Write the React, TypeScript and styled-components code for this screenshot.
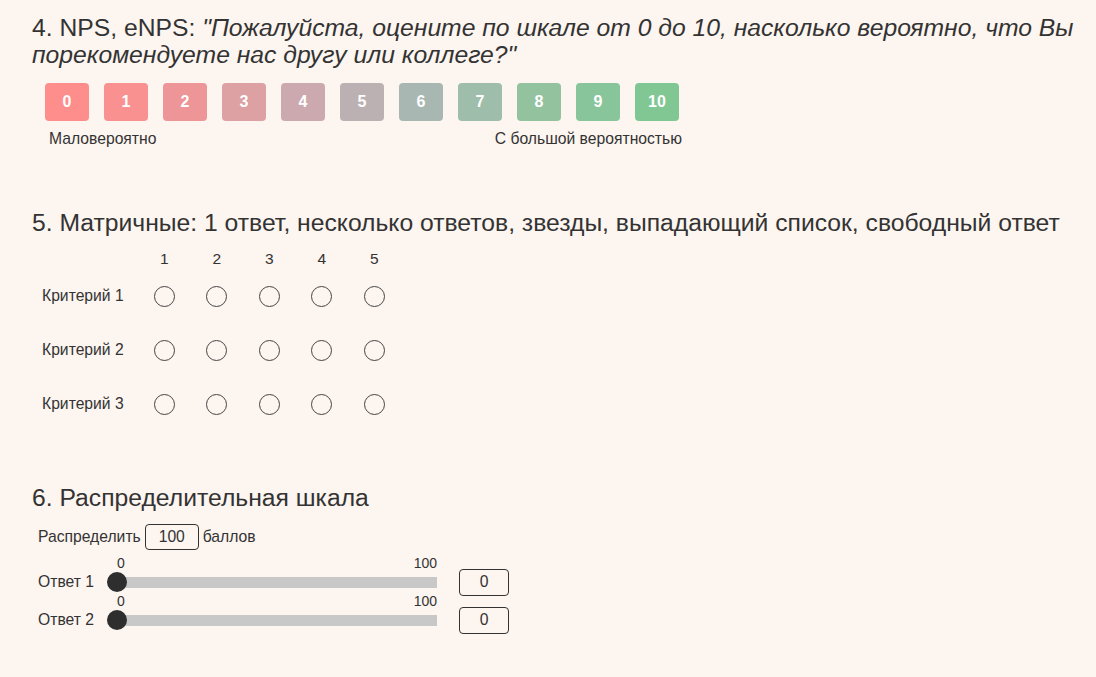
import * as React from "react";
import styled, { createGlobalStyle } from "styled-components";

const npsColors = [
  "#fe8e8c", "#f99191", "#ee9597", "#dda0a3", "#cca9ae", "#bbb1b3",
  "#a9b7b2", "#9ebdab", "#93c29f", "#89c59a", "#80c793",
];

const criteria = ["Критерий 1", "Критерий 2", "Критерий 3"];
const answers = ["Ответ 1", "Ответ 2"];

const GlobalStyle = createGlobalStyle`
  html, body {
    margin: 0;
    padding: 0;
    background: #fdf5f0;
  }
  body {
    font-family: "Liberation Sans", Arial, sans-serif;
    color: #333;
  }
  * {
    box-sizing: border-box;
  }
`;

export default function App() {
  return (
    <>
      <GlobalStyle />
      <Page>
        <Title>
          4. NPS, eNPS: <Quote>"Пожалуйста, оцените по шкале от 0 до 10, насколько вероятно, что Вы порекомендуете нас другу или коллеге?"</Quote>
        </Title>
        <Nps>
          <NpsRow>
            {npsColors.map((c, i) => (
              <NpsButton key={i} $color={c}>{i}</NpsButton>
            ))}
          </NpsRow>
          <NpsLabels>
            <span>Маловероятно</span>
            <span>С большой вероятностью</span>
          </NpsLabels>
        </Nps>

        <Title $top={61}>
          5. Матричные: 1 ответ, несколько ответов, звезды, выпадающий список, свободный ответ
        </Title>
        <Matrix>
          <span />
          {[1, 2, 3, 4, 5].map((n) => (
            <ColHead key={n}>{n}</ColHead>
          ))}
          {criteria.map((c) => (
            <React.Fragment key={c}>
              <RowLabel>{c}</RowLabel>
              {[1, 2, 3, 4, 5].map((n) => (
                <Cell key={n}>
                  <Radio />
                </Cell>
              ))}
            </React.Fragment>
          ))}
        </Matrix>

        <Title $top={53}>6. Распределительная шкала</Title>
        <Distribute>
          Распределить <TotalBox>100</TotalBox> баллов
        </Distribute>
        <Answers>
          {answers.map((a) => (
            <Answer key={a}>
              <span />
              <ScaleLabels>
                <span>0</span>
                <span>100</span>
              </ScaleLabels>
              <span />
              <AnswerLabel>{a}</AnswerLabel>
              <Track>
                <Thumb />
              </Track>
              <ValueBox>0</ValueBox>
            </Answer>
          ))}
        </Answers>
      </Page>
    </>
  );
}

const Page = styled.div`
  padding: 14px 0 40px 32px;
`;

const Title = styled.h2<{ $top?: number }>`
  margin: ${(p) => p.$top || 0}px 0 0;
  font-size: 24.7px;
  line-height: 27px;
  font-weight: normal;
  color: #333;
  width: 1062px;
`;

const Quote = styled.i`
  font-style: italic;
`;

const Nps = styled.div`
  margin: 15px 0 0 13px;
  width: 637px;
`;

const NpsRow = styled.div`
  display: flex;
  gap: 15px;
`;

const NpsButton = styled.div<{ $color: string }>`
  width: 44px;
  height: 38px;
  border-radius: 4px;
  background: ${(p) => p.$color};
  color: #fff;
  font-weight: bold;
  font-size: 16px;
  display: flex;
  align-items: center;
  justify-content: center;
`;

const NpsLabels = styled.div`
  display: flex;
  justify-content: space-between;
  margin-top: 9px;
  padding: 0 0 0 4px;
  font-size: 15.7px;
  line-height: 18px;
`;

const Matrix = styled.div`
  display: grid;
  grid-template-columns: 96px repeat(5, 52.5px);
  grid-template-rows: 20px repeat(3, 54px);
  margin: 13px 0 0 10px;
  font-size: 15.7px;
`;

const ColHead = styled.div`
  display: flex;
  align-items: center;
  justify-content: center;
  font-size: 15.5px;
`;

const RowLabel = styled.div`
  display: flex;
  align-items: center;
`;

const Cell = styled.div`
  display: flex;
  align-items: center;
  justify-content: center;
`;

const Radio = styled.div`
  width: 21px;
  height: 21px;
  border: 1.5px solid #444;
  border-radius: 50%;
`;

const Distribute = styled.div`
  display: flex;
  align-items: center;
  gap: 4px;
  margin: 13px 0 0 6px;
  font-size: 15.7px;
`;

const TotalBox = styled.div`
  width: 54px;
  height: 26px;
  border: 1px solid #333;
  border-radius: 4px;
  display: flex;
  align-items: center;
  justify-content: center;
`;

const Answers = styled.div`
  margin: 6px 0 0 6px;
`;

const Answer = styled.div`
  display: grid;
  grid-template-columns: 79px 320px 72px;
  grid-template-rows: 14px 24px;
  align-items: center;
  font-size: 15.7px;
`;

const ScaleLabels = styled.div`
  display: flex;
  justify-content: space-between;
  font-size: 14px;
  line-height: 14px;
`;

const AnswerLabel = styled.div``;

const Track = styled.div`
  position: relative;
  height: 11px;
  background: #c8c8c8;
`;

const Thumb = styled.div`
  position: absolute;
  left: -10px;
  top: -4.5px;
  width: 20px;
  height: 20px;
  border-radius: 50%;
  background: #2e2e2e;
`;

const ValueBox = styled.div`
  justify-self: end;
  width: 50px;
  height: 27px;
  border: 1px solid #333;
  border-radius: 4px;
  display: flex;
  align-items: center;
  justify-content: center;
  font-size: 15.7px;
`;
